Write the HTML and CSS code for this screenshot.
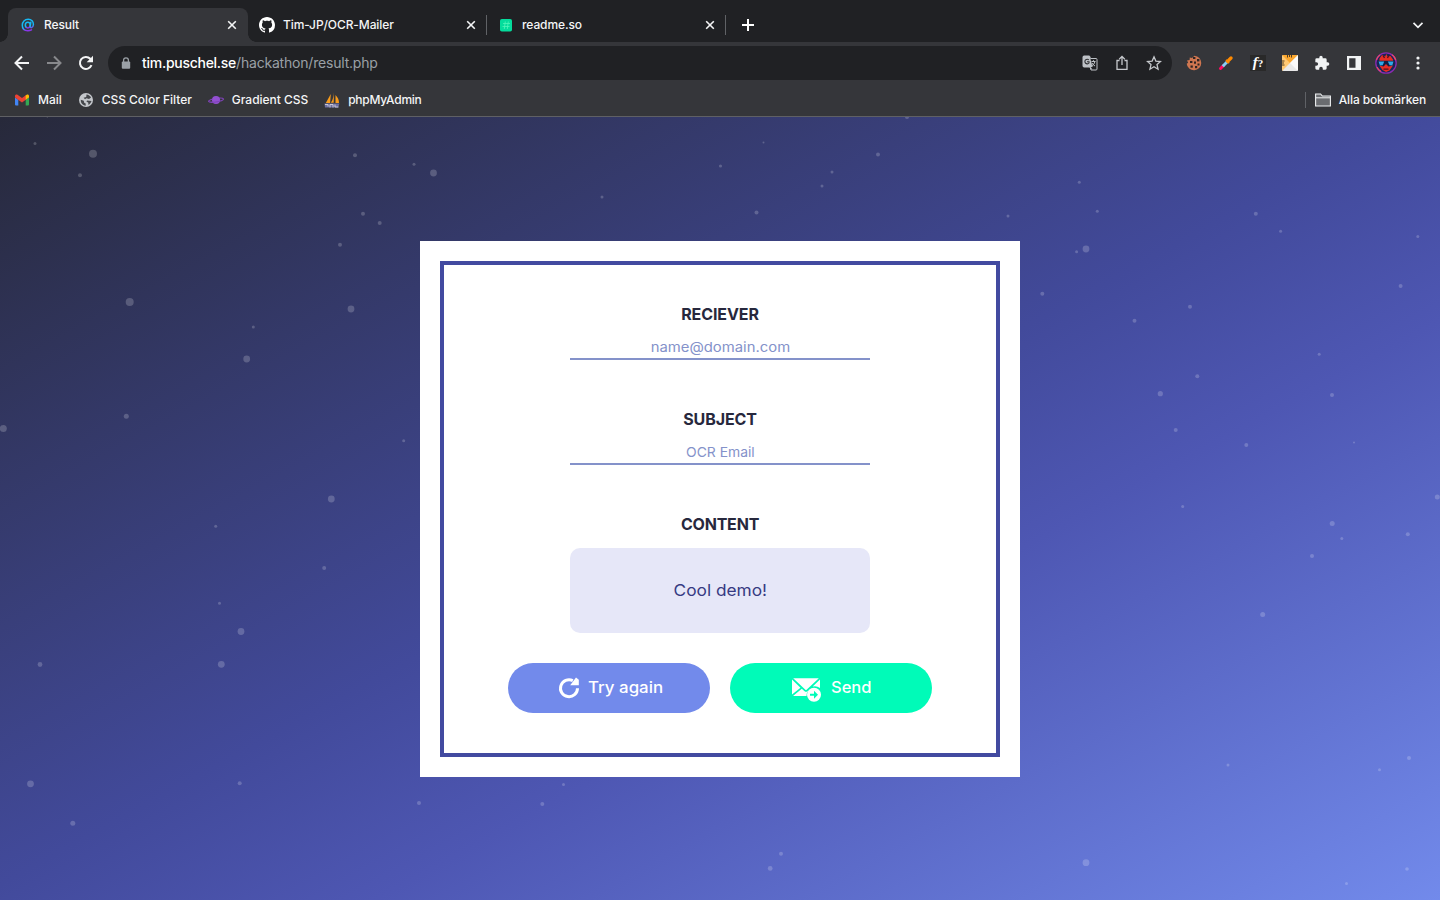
FILE: index.html
```html
<!DOCTYPE html>
<html lang="sv">
<head>
<meta charset="utf-8">
<title>Result</title>
<link rel="stylesheet" href="styles.css">
</head>
<body>
<header class="browser">
  <div class="tabs">
    <div class="tab tab-active">
      <svg class="fav" viewBox="0 0 16 16"><defs><linearGradient id="at" x1="0" y1="0" x2=".3" y2="1"><stop offset=".7" stop-color="#16b9f5"/><stop offset="1" stop-color="#8a35e8"/></linearGradient></defs><g fill="none" stroke="url(#at)" stroke-width="1.500" stroke-linecap="round"><ellipse cx="7.800" cy="8.100" rx="2.500" ry="2.800"/><path d="M10.800 5.200 10.200 9.400c-.2 2 2.900 1.700 3.200-1.600C13.700 4.500 11.300 2.300 8.200 2.300 4.700 2.300 2.300 4.900 2.300 8.200c0 3.400 2.300 5.500 5.500 5.500 1.500 0 2.600-.3 3.700-.9"/></g></svg>
      <span class="tab-title">Result</span>
      <svg class="close" viewBox="0 0 10 10"><path d="M1.200 1.200l7.600 7.600M8.800 1.200L1.200 8.800"/></svg>
    </div>
    <div class="tab tab-second">
      <svg class="fav" viewBox="0 0 16 16"><path fill="#fff" d="M8 0C3.580 0 0 3.580 0 8c0 3.540 2.290 6.530 5.470 7.590.4.070.55-.17.55-.38 0-.19-.01-.82-.01-1.490-2.010.37-2.530-.49-2.690-.94-.09-.23-.48-.94-.82-1.130-.28-.15-.68-.52-.01-.53.63-.01 1.080.58 1.230.82.72 1.210 1.870.87 2.330.66.07-.52.28-.87.51-1.070-1.780-.2-3.640-.89-3.640-3.950 0-.87.31-1.590.82-2.150-.08-.2-.36-1.020.08-2.120 0 0 .67-.21 2.200.82.64-.18 1.320-.27 2-.27s1.360.09 2 .27c1.530-1.040 2.200-.82 2.200-.82.44 1.100.16 1.920.08 2.120.51.56.82 1.270.82 2.150 0 3.070-1.870 3.750-3.650 3.950.29.25.54.73.54 1.480 0 1.070-.01 1.930-.01 2.200 0 .21.15.46.55.38A8.010 8.010 0 0016 8c0-4.420-3.580-8-8-8z"/></svg>
      <span class="tab-title">Tim-JP/OCR-Mailer</span>
      <svg class="close" viewBox="0 0 10 10"><path d="M1.200 1.200l7.600 7.600M8.800 1.200L1.200 8.800"/></svg>
    </div>
    <i class="tab-rule"></i>
    <div class="tab tab-third">
      <svg class="fav" viewBox="0 0 16 16"><rect x="2" y="2" width="12" height="12.500" rx="1.800" fill="#04dc9c"/><path d="M5 6.500h7M4.500 9.500h7M7.300 4.500 6.300 12M10.300 4.500 9.300 12" stroke="#4ff5b9" stroke-width=".8"/></svg>
      <span class="tab-title">readme.so</span>
      <svg class="close" viewBox="0 0 10 10"><path d="M1.200 1.200l7.600 7.600M8.800 1.200L1.200 8.800"/></svg>
    </div>
    <i class="tab-rule"></i>
    <svg class="new-tab" viewBox="0 0 12 12"><path d="M6 0v12M0 6h12"/></svg>
    <svg class="chevron" viewBox="0 0 12 12"><path d="M1.500 3.800l4.500 4.500 4.500-4.500"/></svg>
  </div>

  <div class="toolbar">
    <svg class="nav" viewBox="0 0 16 16"><path d="M15 8H2M8 1.500 1.500 8 8 14.500"/></svg>
    <svg class="nav nav-dim" viewBox="0 0 16 16"><path d="M1 8h13M8 1.500 14.500 8 8 14.500"/></svg>
    <svg class="nav" viewBox="0 0 16 16"><path d="M13.500 10.200A6 6 0 1 1 12.300 3.800L13.800 5.500"/><path class="solid" d="M15 .8v6.400H8.700z"/></svg>
    <div class="omnibox">
      <svg class="lock" viewBox="0 0 10 12"><rect x=".8" y="4.500" width="8.400" height="7.300" rx="1" fill="#9aa0a6"/><path d="M2.600 5V3.200a2.400 2.400 0 0 1 4.800 0V5" fill="none" stroke="#9aa0a6" stroke-width="1.300"/></svg>
      <span class="url"><b>tim.puschel.se</b>/hackathon/result.php</span>
      <svg class="omni-icon" viewBox="0 0 16 16"><path d="M1.500 1h6l1 2.500h5.500a1 1 0 0 1 1 1V14a1 1 0 0 1-1 1H9l-1-3H2a1 1 0 0 1-1-1V2z" fill="none" stroke="#bdc1c6"/><path d="M1 1h6.600l3 11H1z" fill="#bdc1c6"/><path d="M6.900 5A2.300 2.300 0 1 0 7 8V6.800H5" fill="none" stroke="#303134" stroke-width="1.100"/><path d="M9.500 6.500h4M11.500 5.200v1.300M12.800 6.700c-.4 1.900-1.400 3-2.700 4M10 8c.6 1.200 1.600 2.200 3 3M8.500 12.200l1.200 2.200" fill="none" stroke="#bdc1c6"/></svg>
      <svg class="omni-icon" viewBox="0 0 16 16"><path class="line" d="M5.500 5.500h-2.500v8.800h10V5.500h-2.500M8 10V1.500M5.200 4.200 8 1.400l2.800 2.800"/></svg>
      <svg class="omni-icon" viewBox="0 0 16 16"><path class="line" d="M8 1.800l1.850 4.300 4.700.4-3.550 3.100 1.050 4.600L8 11.750 3.950 14.200 5 9.600 1.450 6.500l4.700-.4z"/></svg>
    </div>
    <div class="extensions">
      <svg viewBox="0 0 16 16"><path fill="#cf7650" d="M8.500.7a7.300 7.300 0 1 1-7.800 8l1.500-1L1 5.600 3.600 5l.2-2.500L6 3z"/><g fill="#302523"><rect x="7" y="2" width="2.400" height="2"/><rect x="11" y="4" width="2.400" height="2.400"/><rect x="4" y="6" width="2.400" height="2"/><rect x="8" y="6.500" width="2" height="2.200"/><rect x="11.500" y="8.500" width="2" height="2"/><rect x="4.500" y="10.500" width="2.300" height="2.200"/><rect x="9" y="11" width="2.200" height="2.200"/></g></svg>
      <svg viewBox="0 0 16 16"><path d="M2.500 13.500 5.500 10.500" stroke="#ff0c60" stroke-width="3" stroke-linecap="round"/><path d="M4.800 11.200 9.500 6.500" stroke="#86cef5" stroke-width="3"/><path d="M9.600 6.400 13 3" stroke="#ff8a00" stroke-width="3.400" stroke-linecap="round"/><path d="M7.900 4.900l3.200 3.200" stroke="#ff8a00" stroke-width="1.500"/></svg>
      <span class="font-icon"><i>f</i>?</span>
      <svg viewBox="0 0 16 16"><rect width="16" height="16" rx="1.500" fill="#e9e9e9"/><path d="M0 1.500Q0 0 1.500 0H16L0 16z" fill="#ffc873"/><path d="M0 0l8 8L16 0z" fill="#fba72f"/><path d="M8 8l8 8V0z" fill="#fafafa"/><path d="M5.500 0v2.500M7.500 0v2M9.500 0v2.500M0 6h2.500M0 8h2M0 10h2.500" stroke="#503c24" stroke-width="1"/></svg>
      <svg viewBox="0 0 24 24"><path fill="#f1f3f4" d="M20.500 11H19V7a2 2 0 0 0-2-2h-4V3.500a2.500 2.500 0 0 0-5 0V5H4a2 2 0 0 0-2 2v3.800h1.500a2.700 2.700 0 0 1 0 5.400H2V20a2 2 0 0 0 2 2h3.800v-1.500a2.700 2.700 0 0 1 5.400 0V22H17a2 2 0 0 0 2-2v-4h1.500a2.500 2.500 0 0 0 0-5z"/></svg>
      <svg viewBox="0 0 16 16"><path fill="#f1f3f4" fill-rule="evenodd" d="M1 1h14v14H1zM3.200 3.200v9.600h6.300V3.200z"/></svg>
      <svg class="avatar" viewBox="0 0 22 22"><circle cx="11" cy="11" r="10.200" fill="#182659" stroke="#8a2bb0" stroke-width="1.300"/><path d="M1.500 8A10 10 0 0 1 5 3M17 2.800A10 10 0 0 1 20.700 8M2 15a10 10 0 0 0 4 4.500" fill="none" stroke="#ef4a65" stroke-width="1.200"/><path d="M4.500 6.500 7 3l3 1.500L11.500 2l1 2.500 3-.5 2.500 3.500v6l-3.500 5-3.500 1.500L7.500 18 4 13z" fill="#e62d24"/><path d="M8 3.500l1.500 2.500M13.800 3.500 12.500 6M8.500 17.200h5" stroke="#50131f" stroke-width="1.300"/><path d="M2.500 8.800h17l-1.500 4.700-4.500 1L11 12l-2.500 2.500-4.500-1z" fill="#102045"/><path d="M3.500 9.400h5.700l-1.500 3.800-2.800.2zM12.800 9.400h5.700l-1.200 4-2.700-.2z" fill="#31a9e8"/></svg>
      <svg class="dots" viewBox="0 0 4 16"><g fill="#f1f3f4"><circle cx="2" cy="3" r="1.600"/><circle cx="2" cy="8" r="1.600"/><circle cx="2" cy="13" r="1.600"/></g></svg>
    </div>
  </div>

  <div class="bookmarks">
    <div class="bookmark bm-mail"><svg viewBox="0 0 16 16"><path fill="#4285f4" d="M1 5.500l3.300 2.200v5.800H2a1 1 0 0 1-1-1z"/><path fill="#34a853" d="M15 5.500l-3.300 2.200v5.800H14a1 1 0 0 0 1-1z"/><path fill="#ea4335" d="M1 5.400V4c0-1.400 1.500-1.900 2.500-1.200L8 6.100l4.500-3.300v4.400L8 10.500z"/><path fill="#fbbc04" d="M11.700 7.800V3.400l1-.7C13.700 2 15 2.700 15 4v1.400z"/></svg><span>Mail</span></div>
    <div class="bookmark bm-color"><svg viewBox="0 0 16 16"><circle cx="8" cy="8" r="7" fill="#c4c7cb"/><path fill="#45474b" d="M2.800 7.800l3 1 .4 2 1.500.6v2.300C4.700 13.200 2.500 11 2.800 7.800zM8.500 2.500c2 .3 3.500 1.100 4.600 3L11 7 8.500 6.200 7 7.200 5.600 5.700l2.600-.8zM9 8.500l4.500.5c-.5 1.800-1.700 3.200-3 4l-.3-2.500L8.500 9.700z"/></svg><span>CSS Color Filter</span></div>
    <div class="bookmark bm-gradient"><svg viewBox="0 0 16 16"><circle cx="8" cy="8" r="4" fill="#9350d2"/><ellipse cx="8" cy="8.200" rx="7.500" ry="1.700" fill="none" stroke="#7f43b9" stroke-width="1.300" transform="rotate(-9 8 8)"/><path d="M4.600 7.200q3.700 1 7-.5" fill="none" stroke="#9350d2" stroke-width="3.500"/></svg><span>Gradient CSS</span></div>
    <div class="bookmark bm-php"><svg viewBox="0 0 16 16"><path fill="#f89c1c" d="M6.800 2 1.800 11h4.300zM10 .3l-.3 10.500H6.800C9 8 9.800 4 10 .3zM11.500 3c2.500 2.500 3.500 5 3.500 8h-3.500z"/><path fill="#6d6fa0" d="M.5 11.500h15L14 15.500H1z"/><path d="M1 12.500h3v2M6 15.500v-3h3v3M11 12.500v2.500h3.500" fill="none" stroke="#d2d2dd" stroke-width=".9"/></svg><span>phpMyAdmin</span></div>
    <div class="all-bookmarks"><svg viewBox="0 0 16 16"><path d="M.6 14V2h5l1.700 2h8.100v10z" fill="#6a6c70" stroke="#eef0f1" stroke-width="1.100"/><path d="M.6 5.800h14.800" stroke="#eef0f1"/></svg><span>Alla bokmärken</span></div>
  </div>
</header>

<main class="stage">
  <svg class="stars" id="stars" viewBox="0 117 1440 783"></svg>
  <section class="card">
    <form class="frame">
      <div class="field">
        <label class="label label-reciever">RECIEVER</label>
        <div class="input input-mail"><span>name@domain.com</span></div>
      </div>
      <div class="field">
        <label class="label label-subject">SUBJECT</label>
        <div class="input input-subject"><span>OCR Email</span></div>
      </div>
      <label class="label label-content">CONTENT</label>
      <div class="content"><span>Cool demo!</span></div>
      <div class="actions">
        <div class="btn btn-retry"><svg viewBox="0 0 22 22"><path d="M19.500 11.200A8.500 8.500 0 1 1 14.800 3.600" fill="none" stroke="#fff" stroke-width="3"/><path d="M12.200 8.200h8.600V2.800L18 .4z" fill="#fff"/></svg><span>Try again</span></div>
        <div class="btn btn-send"><svg viewBox="0 0 30 26"><path d="M1.200 1.200h25.600L14.600 12.700q-.6.600-1.200 0zM0 2.500l8.500 8.200L0 17.600zM28 2.500v8.500a9 9 0 0 0-7.300-1.400zM1 19l8.800-7.300 2.800 2.500q1.400 1 2.800 0l.9-.7A8 8 0 0 0 14.500 19z" fill="#fff"/><circle cx="22" cy="17.700" r="7" fill="#fff"/><path d="M18 16.700h4v-3l4 4-4 4v-3h-4z" fill="#00fbb8"/></svg><span>Send</span></div>
      </div>
    </form>
  </section>
</main>
<script src="stars.js"></script>
</body>
</html>
```

FILE: stars.js
```js
// Each star is [centre x, centre y, radius].
const stars = [
  [35,143.5,1.5],[93,153.7,4],[80,175.2,2],[355,155.3,2],[414,164.3,1.5],[433.5,173,3.4],
  [363,213.7,2],[379.7,223,2],[340,244.7,2],[129.7,302,4],[351,309,3.4],[253.3,327,1.5],
  [246.7,359,3.4],[126.3,416.3,2.5],[3.3,428.5,3.5],[403.7,440.7,1.5],[331.3,499,3.4],
  [215.7,526.2,1.5],[324.2,568,2],[219.5,603.3,1.5],[241,631.5,3.4],[221.3,664.3,3.4],
  [40,664.5,2.4],[30.5,783.8,3.4],[239.7,783.3,2],[72.8,823.3,2.5],[419,803,2],[542.3,804,2],
  [563.5,784.6,1.5],[602,197,1.5],[720.5,166,1.6],[763.5,142.5,1],[756.5,212.5,2],
  [822,186,1.5],[832,172,1.5],[878,154.5,2],[907,117,2],[1008,216,1.5],[47.3,117,0.7],
  [1079.3,182.3,1.5],[1097.3,211.3,1.5],[1086,249,3.4],[1076.6,251.8,1.5],[1042.3,293.7,2],
  [1190,306.7,2],[1134.5,320.7,2],[1255.8,213.7,2],[1280.6,231.2,1.5],[1417.8,236.6,1.5],
  [1400.6,286,2],[1319.2,354.3,1.5],[1197.3,376.3,2],[1160.3,393.7,2.6],[1332,395,2],
  [1175.7,430,2],[1246.3,445,2],[1354,442.5,1],[1437.3,497,2.5],[1182.7,506.5,1.5],
  [1332.2,523.4,2.5],[1407.8,534.3,2],[1341.8,538.5,1.5],[1312,556,2],[1262.7,614.5,2.5],
  [1228,765,1.5],[1409,758,2],[1379.5,769.7,1.5],[781,853.7,2],[770.2,868.4,2.4],
  [1086,862.7,3.4],[1407,869,1.8],[1346.5,883.5,1.5]
];
const sky = document.getElementById("stars");
for (const [x, y, r] of stars) {
  const star = document.createElementNS("http://www.w3.org/2000/svg", "circle");
  star.setAttribute("cx", x);
  star.setAttribute("cy", y);
  star.setAttribute("r", r);
  sky.appendChild(star);
}
```

FILE: styles.css
```css
* { box-sizing: border-box; }
body { margin: 0; width: 1440px; height: 900px; overflow: hidden; font-family: Inter, "Liberation Sans", sans-serif; }
svg { display: block; flex: none; }

.browser { height: 117px; background: #35363a; border-bottom: 1px solid #5f6064; color: #f4f5f6; font-size: 12px; font-weight: 500; }
.tabs { display: flex; align-items: center; height: 42px; padding: 8px 16px 0 8px; background: #202124; }
.tab { display: flex; align-items: center; width: 238px; height: 34px; padding: 0 11px; }
.tab-active { position: relative; width: 240px; padding-left: 12px; background: #35363a; border-radius: 8px 8px 0 0; }
.tab-active::before, .tab-active::after { content: ""; position: absolute; bottom: 0; width: 8px; height: 8px; }
.tab-active::before { left: -8px; background: radial-gradient(circle at 0 0, #202124 7.500px, #35363a 8px); }
.tab-active::after { right: -8px; background: radial-gradient(circle at 100% 0, #202124 7.500px, #35363a 8px); }
.tab-second, .tab-third { padding-right: 10px; }
.fav { width: 16px; height: 16px; margin-right: 8px; }
.tab-title { flex: 1; padding-bottom: 2px; letter-spacing: -.1px; white-space: nowrap; }
.close { width: 10px; height: 10px; fill: none; stroke: #f4f5f6; stroke-width: 1.600; }
.tab-rule { width: 1px; height: 20px; background: #606266; }
.new-tab { width: 12px; height: 12px; margin-left: 16px; stroke: #fff; stroke-width: 2; }
.chevron { width: 12px; height: 12px; margin-left: auto; fill: none; stroke: #f1f3f4; stroke-width: 1.700; }

.toolbar { display: flex; align-items: center; height: 42px; padding: 0 19px 0 14px; }
.nav { width: 16px; height: 16px; margin-right: 16px; fill: none; stroke: #f4f5f6; stroke-width: 2; }
.nav .solid { fill: #f4f5f6; stroke: none; }
.nav-dim { stroke: #88898c; }
.omnibox { display: flex; align-items: center; width: 1064px; height: 34px; margin-left: -2px; padding: 0 10px 0 13px; border-radius: 17px; background: #202124; }
.lock { width: 10px; height: 12px; margin-right: 11px; }
.url { flex: 1; padding-bottom: 2px; color: #9aa0a6; font-size: 14px; font-weight: 400; letter-spacing: -.2px; }
.url b { color: #fff; font-weight: 500; letter-spacing: -.27px; }
.omni-icon { width: 16px; height: 16px; margin-left: 16px; }
.omni-icon .line { fill: none; stroke: #c5c8cc; stroke-width: 1.300; }
.extensions { display: flex; align-items: center; gap: 16px; margin-left: 14px; }
.extensions svg { width: 16px; height: 16px; }
.extensions .avatar { width: 22px; height: 22px; margin: 0 -3px; }
.extensions .dots { width: 4px; margin-left: 6px; }
.font-icon { width: 16px; height: 16px; background: #292929; color: #fff; font: bold 11px/15px "Liberation Serif", serif; text-align: center; }
.font-icon i { font-size: 15px; }

.bookmarks { display: flex; align-items: center; height: 32px; padding: 0 14px; letter-spacing: -.03px; }
.bookmark { display: flex; align-items: center; gap: 8px; margin-right: 16px; white-space: nowrap; }
.bookmark span, .all-bookmarks span { padding-bottom: 2px; }
.bookmark svg, .all-bookmarks svg { width: 16px; height: 16px; }
.bm-php { letter-spacing: -.25px; }
.all-bookmarks { display: flex; align-items: center; gap: 8px; height: 16px; margin-left: auto; padding-left: 9px; border-left: 1px solid #606266; letter-spacing: -.12px; white-space: nowrap; }

.stage { position: relative; height: 783px; padding-top: 124px; background: linear-gradient(to bottom right, #27293a, #424a9b 49%, #4e57b3 63%, #728aeb); }
.stars { position: absolute; inset: 0; width: 1440px; height: 783px; fill: rgba(255, 255, 255, .2); }
.card { position: relative; width: 600px; height: 536px; margin: 0 auto; padding: 20px; background: #fff; }
.frame { display: flex; flex-direction: column; align-items: center; height: 496px; padding-top: 37px; border: 4px solid #424aa0; }
.field { width: 300px; height: 58px; margin-bottom: 47px; text-align: center; }
.label { display: block; height: 24px; color: #27283d; font-size: 16px; line-height: 24px; font-weight: 700; letter-spacing: -.1px; }
.label-content { letter-spacing: -.2px; }
.input { height: 34px; border-bottom: 2px solid #8492ca; color: #8492ca; font-size: 13.500px; line-height: 42px; }
.input span, .content span, .btn span { display: inline-block; }
.input-mail span { transform: scaleX(1.1); }
.input-subject span { transform: scaleX(1.03); }
.content { display: flex; align-items: center; justify-content: center; width: 300px; height: 85px; margin: 12px 0 30px; padding-bottom: 2px; border-radius: 10px; background: #e6e7f8; color: #363a82; font-size: 16px; }
.content span { transform: scaleX(1.08); }
.actions { display: flex; gap: 20px; }
.btn { display: flex; align-items: center; width: 202px; height: 50px; border-radius: 25px; color: #fff; font-size: 16px; font-weight: 500; }
.btn span { padding-bottom: 2px; transform-origin: left; }
.btn-retry { padding-left: 50px; background: #728aeb; }
.btn-retry span { transform: scaleX(1.055); }
.btn-retry svg { width: 22px; height: 22px; margin-right: 8px; }
.btn-send { padding-left: 62px; background: #00fbb8; }
.btn-send span { transform: scaleX(1.03); }
.btn-send svg { width: 30px; height: 26px; margin: 3px 9px 0 0; }
```
